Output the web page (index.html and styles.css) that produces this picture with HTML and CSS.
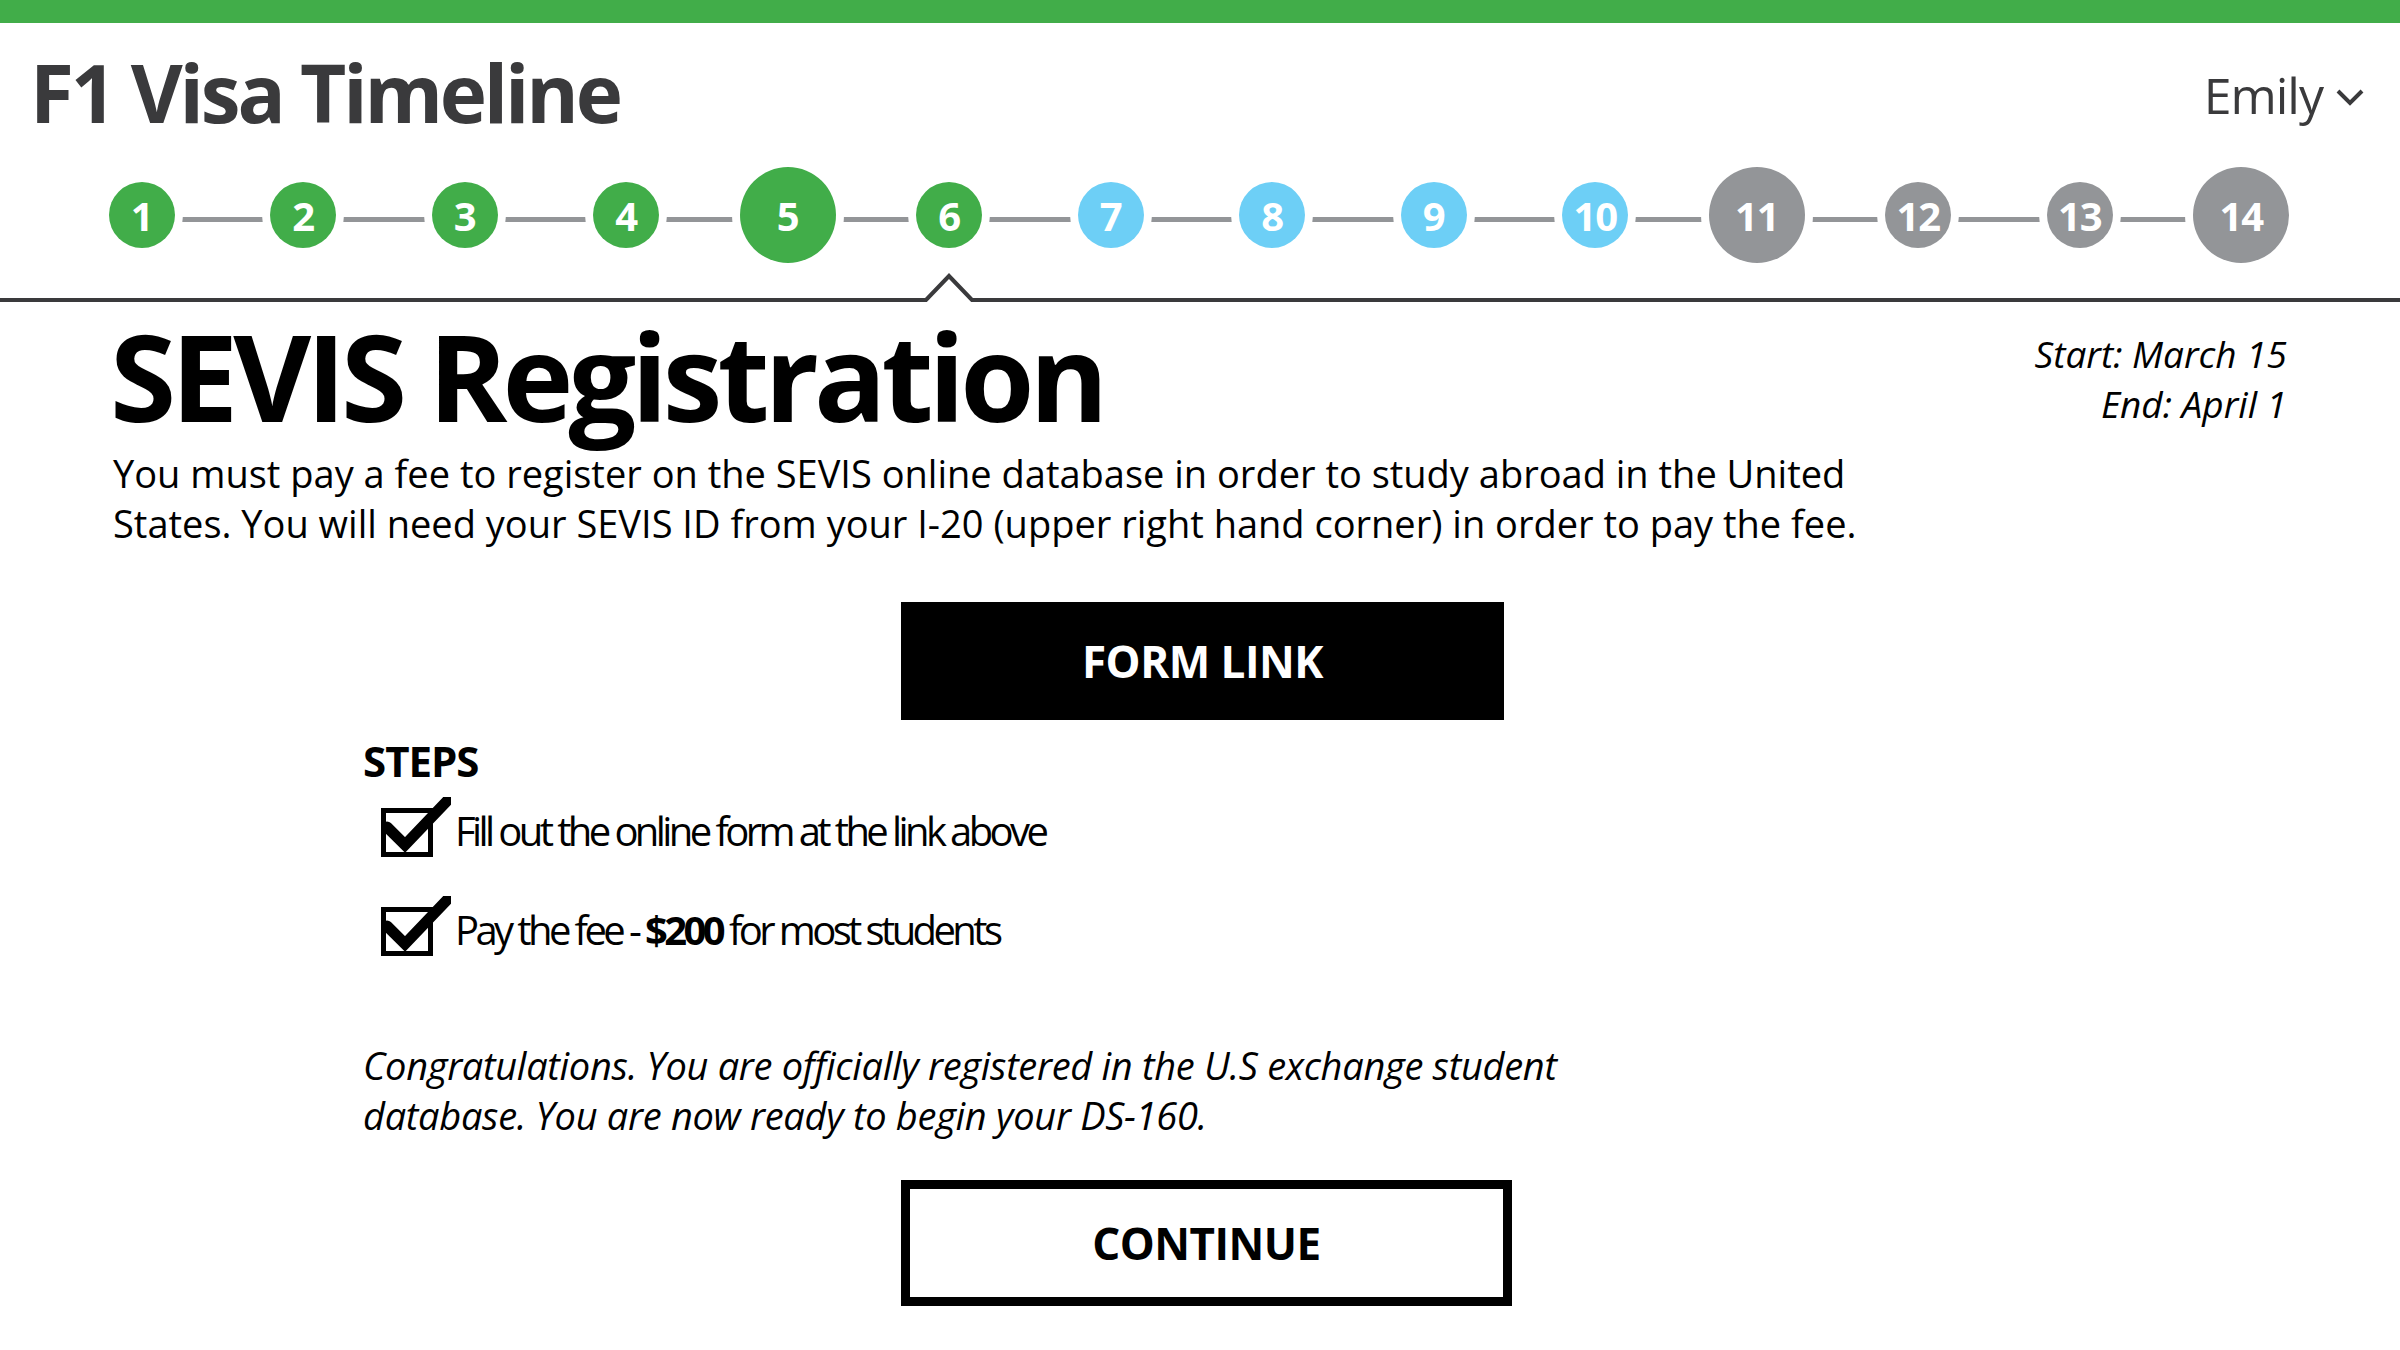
FILE: index.html
```html
<!DOCTYPE html>
<html lang="en">
<head>
<meta charset="utf-8">
<title>F1 Visa Timeline</title>
<link rel="stylesheet" href="styles.css">
</head>
<body>
<div class="topbar"></div>
<header class="header">
  <div class="titlebar">
    <h1 class="app-title">F1 Visa Timeline</h1>
    <div class="user">Emily <svg class="chev" width="30" height="20" viewBox="0 0 30 20"><polyline points="3,4 15,16 27,4" fill="none" stroke="#3a3a3c" stroke-width="4"/></svg></div>
  </div>
  <div class="timeline">
    <div class="step done"><span class="dot">1</span></div>
    <div class="step done"><span class="dot">2</span></div>
    <div class="step done"><span class="dot">3</span></div>
    <div class="step done"><span class="dot">4</span></div>
    <div class="step done"><span class="dot lg">5</span></div>
    <div class="step done"><span class="dot">6</span></div>
    <div class="step next"><span class="dot">7</span></div>
    <div class="step next"><span class="dot">8</span></div>
    <div class="step next"><span class="dot">9</span></div>
    <div class="step next"><span class="dot">10</span></div>
    <div class="step future"><span class="dot lg">11</span></div>
    <div class="step future"><span class="dot">12</span></div>
    <div class="step future"><span class="dot">13</span></div>
    <div class="step future"><span class="dot lg">14</span></div>
  </div>
  <svg class="notch" width="60" height="36" viewBox="0 0 60 36"><rect x="0" y="26" width="60" height="10" fill="#fff"/><polyline points="0,30 7,30 30,6 53,30 60,30" fill="none" stroke="#3a3a3c" stroke-width="4"/></svg>
</header>
<main class="content">
  <div class="intro">
    <h2 class="page-title">SEVIS Registration</h2>
    <div class="dates">
      <div>Start: March 15</div>
      <div>End: April 1</div>
    </div>
  </div>
  <p class="lead">You must pay a fee to register on the SEVIS online database in order to study abroad in the United<br>States. You will need your SEVIS ID from your I-20 (upper right hand corner) in order to pay the fee.</p>
  <a class="btn btn-solid">FORM LINK</a>
  <section class="steps">
    <h3 class="steps-title">STEPS</h3>
    <ul class="step-list">
      <li class="step-item"><svg class="check" width="70" height="60" viewBox="0 0 70 60"><rect x="2.5" y="13.5" width="47" height="44" fill="none" stroke="#000" stroke-width="5"/><path d="M6 30 L24 48 L66 4" fill="none" stroke="#000" stroke-width="11" stroke-linecap="round" stroke-linejoin="miter"/></svg><span class="step-text">Fill out the online form at the link above</span></li>
      <li class="step-item"><svg class="check" width="70" height="60" viewBox="0 0 70 60"><rect x="2.5" y="13.5" width="47" height="44" fill="none" stroke="#000" stroke-width="5"/><path d="M6 30 L24 48 L66 4" fill="none" stroke="#000" stroke-width="11" stroke-linecap="round" stroke-linejoin="miter"/></svg><span class="step-text">Pay the fee - <b>$200</b> for most students</span></li>
    </ul>
  </section>
  <p class="congrats">Congratulations. You are officially registered in the U.S exchange student<br>database. You are now ready to begin your DS-160.</p>
  <a class="btn btn-outline">CONTINUE</a>
</main>
</body>
</html>
```

FILE: styles.css
```css
html, body {
  margin: 0;
  padding: 0;
}
body {
  width: 2400px;
  height: 1350px;
  overflow: hidden;
  background: #fff;
  color: #000;
  font-family: "Open Sans", "Noto Sans", sans-serif;
}

.topbar {
  height: 23px;
  background: #41ad49;
}

.header {
  position: relative;
}

.titlebar {
  display: flex;
  justify-content: space-between;
  align-items: flex-start;
  height: 144px;
  padding: 0 35px 0 30px;
}

.app-title {
  margin: 29px 0 0;
  font-size: 80px;
  line-height: 80px;
  font-weight: 700;
  color: #3a3a3c;
  letter-spacing: -3.2px;
}

.user {
  margin-top: 47px;
  display: flex;
  align-items: center;
  gap: 12px;
  font-size: 50px;
  line-height: 50px;
  color: #3a3a3c;
  letter-spacing: -1px;
}

.chev {
  margin-top: 4px;
}

.timeline {
  position: relative;
  display: grid;
  grid-template-columns: repeat(14, 161.5px);
  align-items: center;
  height: 96px;
  padding: 0 0 35px 61px;
  border-bottom: 4px solid #3a3a3c;
}

.timeline::before {
  content: "";
  position: absolute;
  left: 142px;
  width: 2099px;
  top: 50px;
  height: 5px;
  background: #939598;
}

.step {
  display: flex;
  justify-content: center;
}

.dot {
  position: relative;
  z-index: 1;
  width: 66px;
  height: 66px;
  border-radius: 50%;
  display: flex;
  align-items: center;
  justify-content: center;
  color: #fff;
  font-size: 40px;
  font-weight: 700;
  letter-spacing: -1px;
  box-shadow: 0 0 0 8px #fff;
}

.dot.lg {
  width: 96px;
  height: 96px;
}

.done .dot { background: #41ad49; }
.next .dot { background: #6dcff6; }
.future .dot { background: #939598; }

.notch {
  position: absolute;
  left: 919px;
  top: 247px;
}

.content {
  padding: 0 113px;
}

.intro {
  display: flex;
  justify-content: space-between;
  align-items: flex-start;
}

.page-title {
  margin: 14px 0 0 -3px;
  font-size: 120px;
  line-height: 120px;
  font-weight: 700;
  letter-spacing: -5px;
}

.dates {
  margin-top: 27px;
  text-align: right;
  font-style: italic;
  font-size: 37px;
  line-height: 50px;
}

.lead {
  margin: 12px 0 0;
  font-size: 38px;
  line-height: 50px;
}

.btn {
  display: flex;
  align-items: center;
  justify-content: center;
  box-sizing: border-box;
  margin-left: 788px;
  font-size: 44px;
  font-weight: 700;
  letter-spacing: -0.5px;
  text-decoration: none;
}

.btn-solid {
  margin-top: 54px;
  width: 603px;
  height: 118px;
  background: #000;
  color: #fff;
}

.steps {
  margin-left: 250px;
}

.steps-title {
  margin: 20px 0 0;
  font-size: 42px;
  line-height: 42px;
  font-weight: 700;
  letter-spacing: -1px;
}

.step-list {
  margin: 15px 0 0;
  padding: 0;
  list-style: none;
}

.step-item {
  display: flex;
  align-items: flex-start;
  height: 60px;
}

.step-item + .step-item {
  margin-top: 39px;
}

.check {
  margin-left: 18px;
  flex: none;
}

.step-text {
  padding-top: 4px;
  margin-left: 4px;
  font-size: 40px;
  line-height: 60px;
  letter-spacing: -3.6px;
}

.step-text b {
  font-weight: 700;
}

.congrats {
  margin: 84px 0 0 250px;
  font-style: italic;
  font-size: 38px;
  line-height: 50px;
  letter-spacing: -0.3px;
}

.btn-outline {
  margin-top: 40px;
  width: 611px;
  height: 126px;
  border: 9px solid #000;
  background: #fff;
  color: #000;
}
```
